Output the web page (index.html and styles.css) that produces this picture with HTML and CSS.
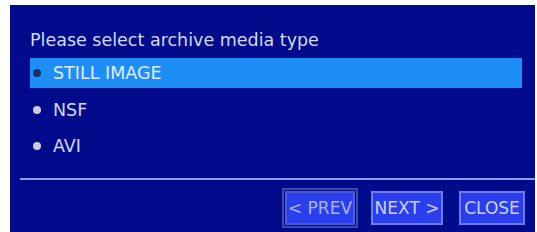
FILE: index.html
```html
<!DOCTYPE html>
<html lang="en">
<head>
  <meta charset="UTF-8">
  <title>Archive media type</title>
  <link rel="stylesheet" href="styles.css">
</head>
<body>
  <div class="dialog">
    <!-- title -->
    <div class="dialog-title">Please select archive media type</div>

    <!-- media type list -->
    <ul class="media-list">
      <li class="media-item selected"><span class="dot"></span><span>STILL IMAGE</span></li>
      <li class="media-item"><span class="dot"></span><span>NSF</span></li>
      <li class="media-item"><span class="dot"></span><span>AVI</span></li>
    </ul>

    <div class="divider"></div>

    <!-- buttons -->
    <div class="button-row">
      <button class="btn btn-prev">&lt; PREV</button>
      <button class="btn btn-next">NEXT &gt;</button>
      <button class="btn btn-close">CLOSE</button>
    </div>
  </div>
</body>
</html>
```

FILE: styles.css
```css
body {
    margin: 0;
    background: #ffffff;
    font-family: "DejaVu Sans", "Liberation Sans", sans-serif;
}
.dialog {
    width: 525px;
    height: 227px;
    margin: 5px 0 0 10px;
    background: #010b8b;
    color: #d3d9f4;
    overflow: hidden;
}
.dialog-title {
    padding: 24px 0 0 20px;
    height: 22px;
    line-height: 22px;
    font-size: 17.5px;
}
.media-list {
    list-style: none;
    margin: 7px 13px 0 20px;
    padding: 0;
}
.media-item {
    display: flex;
    align-items: center;
    gap: 12px;
    height: 30px;
    padding-left: 3px;
    margin-bottom: 6.5px;
    font-size: 17.5px;
}
.media-item.selected {
    background: #1d8ef6;
    color: #e2e9ff;
}
.dot {
    width: 8px;
    height: 8px;
    border-radius: 50%;
    background: #c9cde0; /* 일반 점 */
}
.selected .dot {
    background: #14306e; /* 선택된 점 */
}
.divider {
    height: 2px;
    margin: 17px 0 0 10px;
    background: #8e9cef;
}
.button-row {
    display: flex;
    justify-content: flex-end;
    gap: 16px;
    padding: 11px 10px 0 0;
}
.btn {
    height: 34px;
    border: 2px solid #6c7cf0;
    background: #2a3eec;
    color: #c9d1fb;
    font-family: "DejaVu Sans", "Liberation Sans", sans-serif;
    font-size: 17px;
    padding: 0;
    cursor: pointer;
}
.btn-prev {
    width: 70px;
    color: #a9b4f2;
    border-color: #4b5ad6;
    outline: 2px solid #3d4aa6; /* 포커스 테두리 */
    outline-offset: 1px;
}
.btn-next {
    width: 72px;
}
.btn-close {
    width: 66px;
}
```
